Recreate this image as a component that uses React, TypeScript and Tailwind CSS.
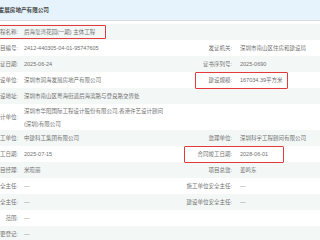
import React from "react";

type Row = {
  label: string;
  value: string | string[];
  rlabel?: string;
  rvalue?: string;
  h?: string;
  box?: "left" | "right";
};

const rows: Row[] = [
  { label: "工程名称:", value: "后海玺湾花园(一期) 主体工程", box: "left" },
  { label: "项目编号:", value: "2412-440305-04-01-95747605", rlabel: "发证机关:", rvalue: "深圳市南山区住房和建设局" },
  { label: "发证日期:", value: "2025-06-24", rlabel: "证书序列号:", rvalue: "2025-0690" },
  { label: "建设单位:", value: "深圳市润海发展房地产有限公司", rlabel: "建设规模:", rvalue: "167034.39平方米", box: "right" },
  { label: "建设地址:", value: "深圳市南山区粤海街道后海滨路与登良路交界处" },
  {
    label: "设计单位:",
    value: ["深圳市华阳国际工程设计股份有限公司,香港许艺设计顾问", "(深圳)有限公司"],
    h: "h-[26px]",
  },
  { label: "施工单位:", value: "中建科工集团有限公司", rlabel: "监理单位:", rvalue: "深圳科宇工程顾问有限公司" },
  { label: "开工日期:", value: "2025-07-15", rlabel: "合同竣工日期:", rvalue: "2028-06-01", box: "right" },
  { label: "项目经理:", value: "米晓丽", rlabel: "项目总监:", rvalue: "姜鸣东" },
  { label: "项目安全主任:", value: "---", rlabel: "施工单位安全主任:", rvalue: "---" },
  { label: "监理安全主任:", value: "---", rlabel: "建设单位安全主任:", rvalue: "---" },
  { label: "范围:", value: "---" },
  { label: "变更登记:", value: "---" },
];

export default function App() {
  return (
    <div
      className="w-[320px] h-[240px] overflow-hidden bg-white text-[#707070] text-[5.5px] leading-[8px]"
      style={{ fontFamily: '"Liberation Sans", "Noto Sans CJK SC", sans-serif' }}
    >
      {/* Company header */}
      <div className="h-[21px] bg-[#e6f3fc] border-b border-[#d8dde0] flex items-center">
        <span className="ml-[-7px] whitespace-nowrap text-[5.6px] font-bold text-[#444]">海发展房地产有限公司</span>
      </div>

      <div className="pt-[3px]">
        {rows.map((r, i) => (
          <div
            key={i}
            className={`${r.h ?? "h-[16px]"} flex items-center ${i % 2 === 0 ? "bg-[#f3f7f6]" : "bg-white"}`}
          >
            {/* left part */}
            <div className="relative w-[185px] flex items-center h-full shrink-0">
              <div className="w-[18px] flex justify-end overflow-hidden whitespace-nowrap shrink-0">
                <span>{r.label}</span>
              </div>
              <div className="ml-[6px] whitespace-nowrap">
                {Array.isArray(r.value) ? (
                  <div className="flex flex-col gap-[5px]">
                    {r.value.map((v) => (
                      <span key={v}>{v}</span>
                    ))}
                  </div>
                ) : (
                  r.value
                )}
              </div>
              {r.box === "left" && (
                <span className="absolute left-[-2px] top-[1px] w-[108px] h-[14px] border border-[#e23b3b] rounded-[1px]" />
              )}
            </div>

            {/* right part */}
            {r.rlabel && (
              <div className="relative flex items-center h-full">
                <div className="w-[47px] flex justify-end whitespace-nowrap shrink-0">
                  <span>{r.rlabel}</span>
                </div>
                <div className="ml-[8px] whitespace-nowrap">{r.rvalue}</div>
                {r.box === "right" && (
                  <span
                    className={`absolute top-[0px] h-[17px] border border-[#e23b3b] rounded-[1px] ${
                      r.rlabel === "建设规模:" ? "left-[10px] w-[93px]" : "left-[-1px] w-[100px]"
                    }`}
                  />
                )}
              </div>
            )}
          </div>
        ))}
      </div>
    </div>
  );
}
